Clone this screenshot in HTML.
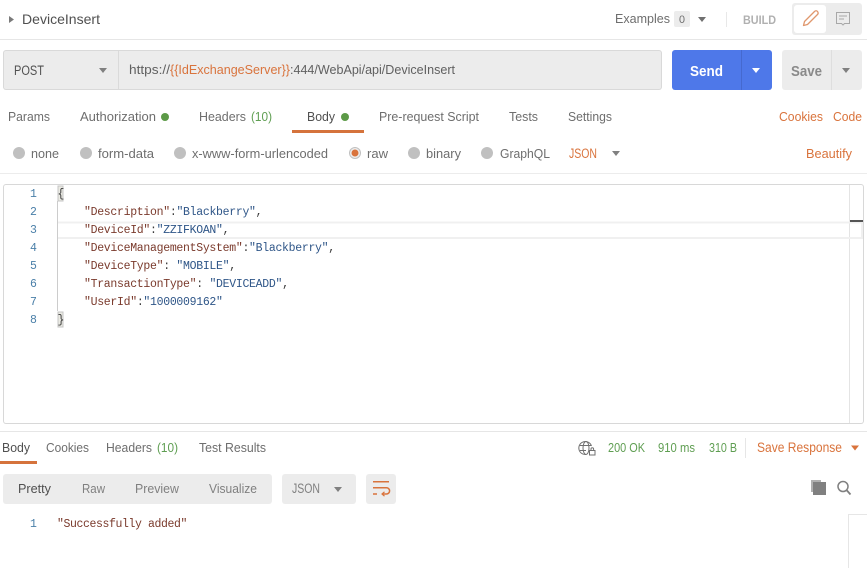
<!DOCTYPE html>
<html lang="en">
<head>
<meta charset="utf-8">
<title>DeviceInsert</title>
<style>
html,body{margin:0;padding:0;background:#fff;width:867px;height:568px;overflow:hidden}
svg{display:block}
text{font-family:"Liberation Sans",sans-serif;font-size:13px;fill:#6e6e6e;white-space:pre}
.m{font-family:"Liberation Mono",monospace;font-size:11.500px;letter-spacing:-.3px;fill:#3c3c3c}
.k{fill:#7a3a2c}
.v{fill:#2f5688}
.n{font-family:"Liberation Mono",monospace;font-size:11.500px;fill:#4a7fa8}
.o{fill:#d9733c}
.g{fill:#5f9e52}
.d{fill:#505050}
.b{font-weight:bold}
</style>
</head>
<body>
<svg width="867" height="568" viewBox="0 0 867 568" xmlns="http://www.w3.org/2000/svg">
<rect width="867" height="568" fill="#fff"/>

<!-- header -->
<path d="M9 16l5 3.500-5 3.500z" fill="#7a7a7a"/>
<text x="22" y="24" textLength="78" lengthAdjust="spacingAndGlyphs" style="font-size:14px" class="d">DeviceInsert</text>
<text x="615" y="23" textLength="55" lengthAdjust="spacingAndGlyphs">Examples</text>
<rect x="674" y="11" width="16" height="16" rx="2" fill="#ececec"/>
<text x="679" y="23" textLength="6" lengthAdjust="spacingAndGlyphs" style="font-size:11px">0</text>
<path d="M698 17h8l-4 5z" fill="#707070"/>
<rect x="726" y="12" width="1" height="15" fill="#e8e8e8"/>
<text x="743" y="24" textLength="33" lengthAdjust="spacingAndGlyphs" class="b" style="font-size:12px;fill:#b0b0b0">BUILD</text>
<rect x="792" y="3" width="70" height="32" rx="3" fill="#ececec"/>
<rect x="794" y="5" width="32" height="28" rx="3" fill="#fff"/>
<path d="M803.500 25.500l1-4 10-10c1-1 2.200-1 3 0s1 2 0 3l-10 10z" fill="none" stroke="#e0976d" stroke-width="1.300" stroke-linejoin="round"/>
<path d="M836.500 12.500h13v11h-5l-1.500 1.500-1.500-1.500h-5z" fill="none" stroke="#a8a8a8" stroke-width="1"/>
<path d="M839 16h8M839 19h5" stroke="#a8a8a8" stroke-width="1"/>
<rect x="0" y="39" width="867" height="1" fill="#e6e6e6"/>

<!-- url bar -->
<rect x="3" y="50" width="659" height="40" rx="3" fill="#d9d9d9"/>
<rect x="4" y="51" width="657" height="38" rx="2" fill="#ececec"/>
<rect x="118" y="51" width="1" height="38" fill="#dadada"/>
<text x="14" y="75" textLength="30" lengthAdjust="spacingAndGlyphs" class="d" style="font-size:13.500px">POST</text>
<path d="M99 68h8l-4 5z" fill="#808080"/>
<text x="129" y="74" textLength="41" lengthAdjust="spacingAndGlyphs" style="fill:#606060">https://</text>
<text x="170" y="74" textLength="120" lengthAdjust="spacingAndGlyphs" class="o">{{IdExchangeServer}}</text>
<text x="290" y="74" textLength="165" lengthAdjust="spacingAndGlyphs" style="fill:#606060">:444/WebApi/api/DeviceInsert</text>

<rect x="672" y="50" width="100" height="40" rx="3" fill="#4e78e9"/>
<rect x="741" y="50" width="1" height="40" fill="#4569cf"/>
<text x="690" y="76" textLength="33" lengthAdjust="spacingAndGlyphs" class="b" style="font-size:15px;fill:#fff">Send</text>
<path d="M752 68h8l-4 5z" fill="#fff"/>
<rect x="782" y="50" width="80" height="40" rx="3" fill="#ececec"/>
<rect x="831" y="50" width="1" height="40" fill="#dedede"/>
<text x="791" y="76" textLength="31" lengthAdjust="spacingAndGlyphs" class="b" style="font-size:15px;fill:#8a8a8a">Save</text>
<path d="M842 68h8l-4 5z" fill="#808080"/>

<!-- request tabs -->
<text x="8" y="121" textLength="42" lengthAdjust="spacingAndGlyphs">Params</text>
<text x="80" y="121" textLength="76" lengthAdjust="spacingAndGlyphs">Authorization</text>
<circle cx="165" cy="117" r="4" fill="#5c9a47"/>
<text x="199" y="121" textLength="47" lengthAdjust="spacingAndGlyphs">Headers</text>
<text x="251" y="121" textLength="21" lengthAdjust="spacingAndGlyphs" class="g">(10)</text>
<text x="307" y="121" textLength="28" lengthAdjust="spacingAndGlyphs" class="d">Body</text>
<circle cx="345" cy="117" r="4" fill="#5c9a47"/>
<rect x="292" y="130" width="72" height="3" fill="#d5733c"/>
<text x="379" y="121" textLength="100" lengthAdjust="spacingAndGlyphs">Pre-request Script</text>
<text x="509" y="121" textLength="29" lengthAdjust="spacingAndGlyphs">Tests</text>
<text x="568" y="121" textLength="44" lengthAdjust="spacingAndGlyphs">Settings</text>
<text x="779" y="121" textLength="44" lengthAdjust="spacingAndGlyphs" class="o">Cookies</text>
<text x="833" y="121" textLength="29" lengthAdjust="spacingAndGlyphs" class="o">Code</text>

<!-- body types -->
<g fill="#c0c0c0">
<circle cx="19" cy="153" r="6"/>
<circle cx="86" cy="153" r="6"/>
<circle cx="180" cy="153" r="6"/>
<circle cx="355" cy="153" r="6"/>
<circle cx="414" cy="153" r="6"/>
<circle cx="487" cy="153" r="6"/>
</g>
<circle cx="355" cy="153" r="5" fill="#ededed"/>
<circle cx="355" cy="153" r="3.500" fill="#d9733c"/>
<text x="31" y="158" textLength="28" lengthAdjust="spacingAndGlyphs">none</text>
<text x="98" y="158" textLength="56" lengthAdjust="spacingAndGlyphs">form-data</text>
<text x="192" y="158" textLength="136" lengthAdjust="spacingAndGlyphs">x-www-form-urlencoded</text>
<text x="367" y="158" textLength="21" lengthAdjust="spacingAndGlyphs">raw</text>
<text x="426" y="158" textLength="35" lengthAdjust="spacingAndGlyphs">binary</text>
<text x="500" y="158" textLength="50" lengthAdjust="spacingAndGlyphs">GraphQL</text>
<text x="569" y="158" textLength="28" lengthAdjust="spacingAndGlyphs" class="o" style="font-size:13.500px">JSON</text>
<path d="M612 151h8l-4 5z" fill="#808080"/>
<text x="806" y="158" textLength="46" lengthAdjust="spacingAndGlyphs" class="o">Beautify</text>
<rect x="0" y="173" width="867" height="1" fill="#ececec"/>

<!-- editor -->
<rect x="3" y="184" width="861" height="240" rx="3" fill="#d8d8d8"/>
<rect x="4" y="185" width="859" height="238" rx="2" fill="#fff"/>
<rect x="849" y="185" width="1" height="238" fill="#e4e4e4"/>
<path d="M58 222.500H862V238H58" fill="none" stroke="#f0f0f0" stroke-width="2"/>
<rect x="850" y="220" width="13" height="2" fill="#555"/>
<rect x="57" y="201" width="1" height="110" fill="#cccccc"/>
<rect x="58" y="186" width="5" height="15" fill="#ebebe4" stroke="#c4c4c4" stroke-width="1"/>
<rect x="58" y="312" width="5" height="15" fill="#ebebe4" stroke="#c4c4c4" stroke-width="1"/>

<text x="30" y="197" class="n">1</text>
<text x="30" y="215" class="n">2</text>
<text x="30" y="233" class="n">3</text>
<text x="30" y="251" class="n">4</text>
<text x="30" y="269" class="n">5</text>
<text x="30" y="287" class="n">6</text>
<text x="30" y="305" class="n">7</text>
<text x="30" y="323" class="n">8</text>

<text x="57.500" y="197" class="m">{</text>
<text x="84" y="215" class="m"><tspan class="k">"Description"</tspan>:<tspan class="v">"Blackberry"</tspan>,</text>
<text x="84" y="233" class="m"><tspan class="k">"DeviceId"</tspan>:<tspan class="v">"ZZIFKOAN"</tspan>,</text>
<text x="84" y="251" class="m"><tspan class="k">"DeviceManagementSystem"</tspan>:<tspan class="v">"Blackberry"</tspan>,</text>
<text x="84" y="269" class="m"><tspan class="k">"DeviceType"</tspan>: <tspan class="v">"MOBILE"</tspan>,</text>
<text x="84" y="287" class="m"><tspan class="k">"TransactionType"</tspan>: <tspan class="v">"DEVICEADD"</tspan>,</text>
<text x="84" y="305" class="m"><tspan class="k">"UserId"</tspan>:<tspan class="v">"1000009162"</tspan></text>
<text x="57.500" y="323" class="m">}</text>

<!-- response tabs -->
<rect x="0" y="431" width="867" height="1" fill="#e6e6e6"/>
<text x="2" y="452" textLength="28" lengthAdjust="spacingAndGlyphs" class="d">Body</text>
<rect x="0" y="461" width="37" height="3" fill="#d5733c"/>
<text x="46" y="452" textLength="43" lengthAdjust="spacingAndGlyphs">Cookies</text>
<text x="106" y="452" textLength="46" lengthAdjust="spacingAndGlyphs">Headers</text>
<text x="157" y="452" textLength="21" lengthAdjust="spacingAndGlyphs" class="g">(10)</text>
<text x="199" y="452" textLength="67" lengthAdjust="spacingAndGlyphs">Test Results</text>

<g fill="none" stroke="#707070" stroke-width="1">
<path d="M591.500 446a6.500 6.500 0 1 0-5.500 8.500"/>
<ellipse cx="586" cy="448" rx="3" ry="6.500"/>
<path d="M580 445.500h11M580 450.500h6"/>
<rect x="589.500" y="450.500" width="5.500" height="4.500" fill="#fff"/>
<path d="M591 450.500v-1.500a1.300 1.300 0 0 1 2.600 0v1.500"/>
</g>
<text x="608" y="452" textLength="37" lengthAdjust="spacingAndGlyphs" class="g">200 OK</text>
<text x="658" y="452" textLength="37" lengthAdjust="spacingAndGlyphs" class="g">910 ms</text>
<text x="709" y="452" textLength="28" lengthAdjust="spacingAndGlyphs" class="g">310 B</text>
<rect x="745" y="438" width="1" height="20" fill="#e6e6e6"/>
<text x="757" y="452" textLength="85" lengthAdjust="spacingAndGlyphs" class="o" style="font-size:13.500px">Save Response</text>
<path d="M851 445.500h8l-4 5z" fill="#d9733c"/>

<!-- response toolbar -->
<rect x="3" y="474" width="269" height="30" rx="3" fill="#ececec"/>
<text x="18" y="493" textLength="33" lengthAdjust="spacingAndGlyphs" class="d">Pretty</text>
<text x="82" y="493" textLength="23" lengthAdjust="spacingAndGlyphs" style="fill:#808080">Raw</text>
<text x="135" y="493" textLength="44" lengthAdjust="spacingAndGlyphs" style="fill:#808080">Preview</text>
<text x="209" y="493" textLength="48" lengthAdjust="spacingAndGlyphs" style="fill:#808080">Visualize</text>
<rect x="282" y="474" width="74" height="30" rx="3" fill="#ececec"/>
<text x="292" y="493" textLength="28" lengthAdjust="spacingAndGlyphs" style="fill:#808080;font-size:13.500px">JSON</text>
<path d="M334 487h8l-4 5z" fill="#808080"/>
<rect x="366" y="474" width="30" height="30" rx="3" fill="#ececec"/>
<g fill="none" stroke="#d9733c" stroke-width="1.500">
<path d="M373 481.800h16M373 487.800h13.500a3 3 0 0 1 0 6.200h-4M373 494h4"/>
<path d="M384.500 491.800l-2.500 2.200 2.500 2.200" stroke-width="1.200"/>
</g>
<path d="M811 480h10v2h-8v10h-2z" fill="#b0b0b0"/>
<rect x="813" y="482" width="13" height="13" fill="#808080"/>
<circle cx="843" cy="486.500" r="5" fill="none" stroke="#808080" stroke-width="1.500"/>
<path d="M846.500 490l4 4.500" stroke="#808080" stroke-width="1.800"/>

<!-- response body -->
<text x="30" y="527" class="n">1</text>
<text x="57" y="527" class="m k" style="letter-spacing:-.4px">"Successfully added"</text>
<path d="M867 514.500H848.500V568" fill="none" stroke="#e6e6e6"/>
</svg>
</body>
</html>
